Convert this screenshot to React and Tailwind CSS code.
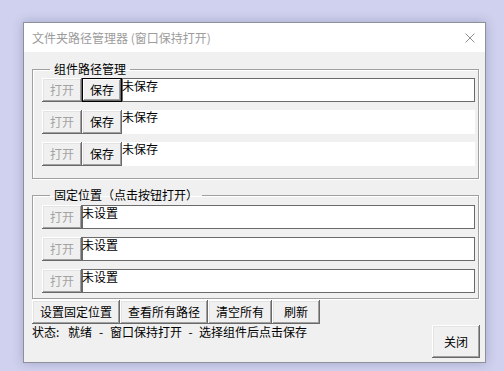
import React from "react";

const face =
  "bg-[#f0f0f0] shadow-[inset_-1px_-1px_0_#696969,inset_1px_1px_0_#ffffff,inset_-2px_-2px_0_#a0a0a0,inset_2px_2px_0_#e3e3e3]";
const focusFace =
  "bg-[#f0f0f0] shadow-[inset_0_0_0_1px_#000000,inset_-2px_-2px_0_#696969,inset_2px_2px_0_#ffffff,inset_-3px_-3px_0_#a0a0a0]";

function Btn({ children, w, disabled, focus, h = "h-[24px]" }) {
  return (
    <div
      className={`${h} ${w} ${focus ? focusFace : face} shrink-0 flex items-center justify-center text-[12px] leading-none ${
        disabled ? "text-[#a3a3a3]" : "text-black"
      }`}
    >
      {children}
    </div>
  );
}

function Box({ text, bordered }) {
  return (
    <div
      className={`h-[24px] flex-1 bg-white ${
        bordered ? "border border-[#6a6a6a]" : ""
      }`}
    >
      <div className={`text-[12px] leading-[13px] text-black ${bordered ? "-ml-px" : ""}`}>
        {text}
      </div>
    </div>
  );
}

export default function App() {
  return (
    <div className="w-[504px] h-[371px] bg-[#cfd1ee] pt-[22px] pl-[23px] font-['Noto_Sans_CJK_SC','Noto_Sans',sans-serif] overflow-hidden">
      <div className="w-[463px] h-[341px] border border-[#8e8f98] bg-[#f0f0f0] shadow-[0_0_10px_rgba(40,40,90,0.25)] flex flex-col">
        {/* title bar */}
        <div className="h-[29px] bg-white flex items-center justify-between pl-[8px] pr-[9px]">
          <span className="text-[12px] leading-none text-[#9c9c9c]">
            文件夹路径管理器 (窗口保持打开)
          </span>
          <svg width="12" height="12" viewBox="0 0 12 12">
            <path d="M1.5 1.5 L10.5 10.5 M10.5 1.5 L1.5 10.5" stroke="#8f8f8f" strokeWidth="1" fill="none" />
          </svg>
        </div>

        <div className="pl-[8px] pr-[6px] flex flex-col">
          {/* group 1 */}
          <fieldset className="mt-[10px] border border-[#a0a0a0] pl-[9px] pr-[3px] pt-[2px] pb-[12px] shadow-[1px_1px_0_#ffffff,inset_1px_1px_0_#ffffff]">
            <legend className="ml-[8px] px-[4px] text-[12px] leading-[14px] text-black">
              组件路径管理
            </legend>
            <div className="flex flex-col gap-[8px]">
              <div className="flex">
                <Btn w="w-[40px]" disabled>打开</Btn>
                <Btn w="w-[40px]" focus>保存</Btn>
                <Box text="未保存" bordered />
              </div>
              <div className="flex">
                <Btn w="w-[40px]" disabled>打开</Btn>
                <Btn w="w-[40px]">保存</Btn>
                <Box text="未保存" />
              </div>
              <div className="flex">
                <Btn w="w-[40px]" disabled>打开</Btn>
                <Btn w="w-[40px]">保存</Btn>
                <Box text="未保存" />
              </div>
            </div>
          </fieldset>

          {/* group 2 */}
          <fieldset className="mt-[9px] border border-[#a0a0a0] pl-[9px] pr-[3px] pt-[3px] pb-[5px] shadow-[1px_1px_0_#ffffff,inset_1px_1px_0_#ffffff]">
            <legend className="ml-[8px] px-[4px] text-[12px] leading-[14px] text-black">
              固定位置（点击按钮打开）
            </legend>
            <div className="flex flex-col gap-[8px]">
              <div className="flex">
                <Btn w="w-[40px]" disabled>打开</Btn>
                <Box text="未设置" bordered />
              </div>
              <div className="flex">
                <Btn w="w-[40px]" disabled>打开</Btn>
                <Box text="未设置" bordered />
              </div>
              <div className="flex">
                <Btn w="w-[40px]" disabled>打开</Btn>
                <Box text="未设置" bordered />
              </div>
            </div>
          </fieldset>

          {/* bottom buttons */}
          <div className="mt-[1px] flex">
            <Btn w="w-[88px]">设置固定位置</Btn>
            <Btn w="w-[88px]">查看所有路径</Btn>
            <Btn w="w-[64px]">清空所有</Btn>
            <Btn w="w-[48px]">刷新</Btn>
          </div>
          <div className="flex justify-between items-start">
            <div className="flex text-[12px] leading-[14px] text-black mt-[1px] whitespace-pre">
              <span>状态</span>
              <span className="inline-block w-[12px]">:</span>
              <span>就绪</span>
              <span className="inline-block w-[18px] text-center">-</span>
              <span>窗口保持打开</span>
              <span className="inline-block w-[17px] text-center">-</span>
              <span>选择组件后点击保存</span>
            </div>
            <div className="mt-[1px] -mr-[1px]">
              <Btn w="w-[48px]" h="h-[33px]">关闭</Btn>
            </div>
          </div>
        </div>
      </div>
    </div>
  );
}
